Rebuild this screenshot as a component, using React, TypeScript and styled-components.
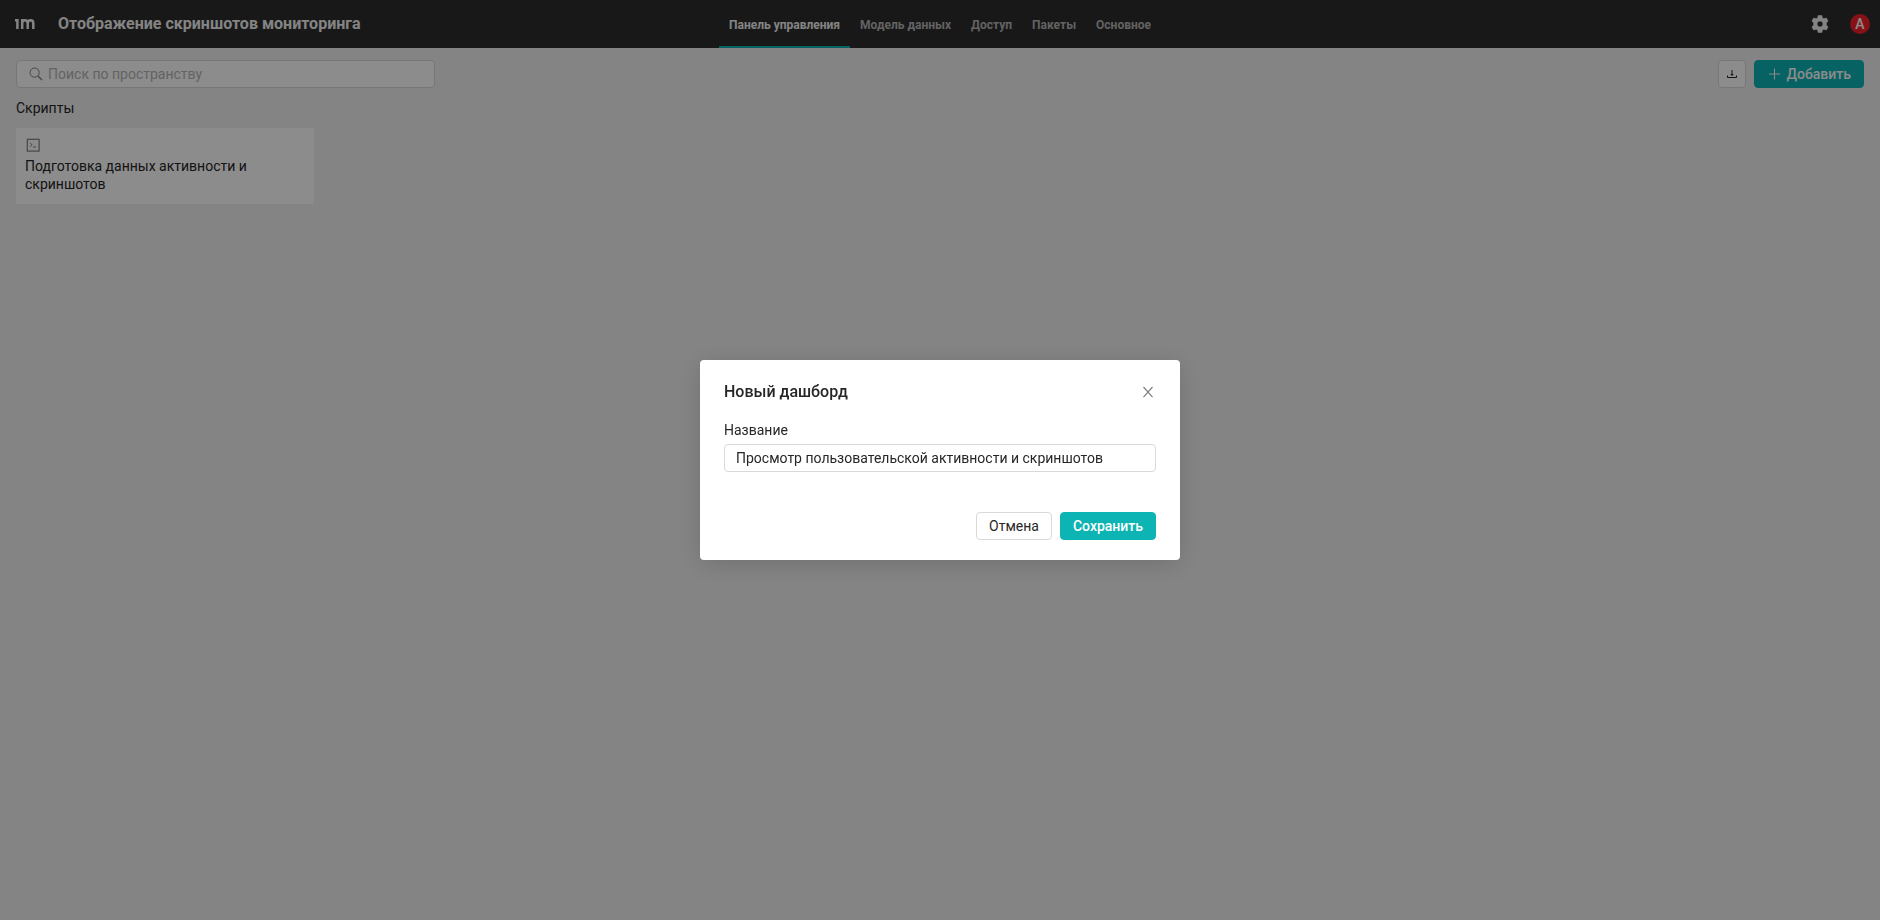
import React from "react";
import styled, { createGlobalStyle } from "styled-components";

const color = {
  header: "#2d2d2d",
  page: "#f0f0f0",
  surface: "#ffffff",
  border: "#d9d9d9",
  text: "#262626",
  muted: "#808080",
  teal: "#0db4b4",
  red: "#f5222d",
};

const GlobalStyle = createGlobalStyle`
  *, *::before, *::after { box-sizing: border-box; }
  body {
    margin: 0;
    background: ${color.page};
    color: ${color.text};
    font: 400 14px/20px Roboto, "Noto Sans", sans-serif;
  }
  button, input { font: inherit; color: inherit; }
  h1, h2, p { margin: 0; }
  svg { display: block; flex: none; }
`;

const Page = styled.div`
  min-height: 100vh;
`;

const Header = styled.header`
  display: grid;
  grid-template-columns: 1fr auto 1fr;
  height: 48px;
  background: ${color.header};
  color: #f0f0f0;
`;

const Brand = styled.div`
  display: flex;
  align-items: center;
  gap: 23px;
  padding-left: 15px;
`;

const Title = styled.h1`
  font-size: 16px;
  line-height: 24px;
  font-weight: 700;
  white-space: nowrap;
`;

const Nav = styled.nav`
  display: flex;
`;

const NavLink = styled.a<{ $active?: boolean }>`
  display: flex;
  align-items: center;
  padding: 4px 10px 0;
  border-bottom: 2px solid ${(p) => (p.$active ? color.teal : "transparent")};
  color: ${(p) => (p.$active ? "#f0f0f0" : "#b4b4b4")};
  font-size: 12px;
  font-weight: 700;
  text-decoration: none;
`;

const Account = styled.div`
  display: flex;
  align-items: center;
  justify-content: flex-end;
  gap: 21px;
  padding-right: 10px;
`;

const IconButton = styled.button`
  display: grid;
  place-items: center;
  padding: 0;
  border: 0;
  background: none;
  color: inherit;
`;

const Avatar = styled(IconButton)`
  width: 20px;
  height: 20px;
  border-radius: 50%;
  background: ${color.red};
  color: #fff;
  font-weight: 500;
`;

const Main = styled.main`
  display: flex;
  flex-direction: column;
  gap: 10px;
  padding: 12px 16px;
`;

const Toolbar = styled.div`
  display: flex;
  align-items: center;
  gap: 8px;
`;

const Search = styled.label`
  display: flex;
  align-items: center;
  gap: 5px;
  width: 419px;
  height: 28px;
  margin-right: auto;
  padding: 0 12px;
  border: 1px solid ${color.border};
  border-radius: 4px;
  background: ${color.surface};
  color: ${color.muted};
`;

const SearchInput = styled.input`
  flex: 1;
  min-width: 0;
  padding: 0;
  border: 0;
  outline: 0;
  background: none;
  &::placeholder { color: #b4b4b4; opacity: 1; }
`;

const Button = styled.button<{ $primary?: boolean }>`
  display: flex;
  align-items: center;
  justify-content: center;
  gap: 6px;
  height: 28px;
  padding: 0 12px;
  border: 1px solid ${(p) => (p.$primary ? color.teal : color.border)};
  border-radius: 4px;
  background: ${(p) => (p.$primary ? color.teal : color.surface)};
  color: ${(p) => (p.$primary ? "#fff" : color.text)};
  font-weight: ${(p) => (p.$primary ? 500 : 400)};
`;

const SquareButton = styled(Button)`
  width: 28px;
  padding: 0;
`;

const SectionTitle = styled.h2`
  font-size: 14px;
  line-height: 20px;
  font-weight: 400;
`;

const Cards = styled.div`
  display: grid;
  grid-template-columns: repeat(6, 1fr);
  gap: 12px;
`;

const Card = styled.article`
  display: flex;
  flex-direction: column;
  gap: 5px;
  padding: 10px 9px 11px;
  border-radius: 2px;
  background: ${color.surface};
`;

const CardName = styled.p`
  line-height: 18px;
`;

const Overlay = styled.div`
  position: fixed;
  inset: 0;
  display: grid;
  place-items: center;
  background: rgba(0, 0, 0, 0.45);
`;

const Dialog = styled.form`
  display: flex;
  flex-direction: column;
  width: 480px;
  padding: 20px 24px;
  border-radius: 4px;
  background: ${color.surface};
  box-shadow: 0 4px 24px rgba(0, 0, 0, 0.15);
`;

const DialogHead = styled.div`
  display: flex;
  align-items: center;
  justify-content: space-between;
  margin-bottom: 16px;
`;

const DialogTitle = styled.h2`
  font-size: 16px;
  line-height: 24px;
  font-weight: 500;
`;

const Label = styled.label`
  margin-bottom: 4px;
`;

const TextInput = styled.input`
  height: 28px;
  padding: 0 11px;
  border: 1px solid ${color.border};
  border-radius: 4px;
  outline: 0;
  background: ${color.surface};
`;

const DialogActions = styled.div`
  display: flex;
  justify-content: flex-end;
  gap: 8px;
  margin-top: 40px;
`;

const Logo = () => (
  <svg width="20" height="12" viewBox="0 0 20 12" fill="none" stroke="#f0f0f0" strokeWidth="2.5" role="img" aria-label="im">
    <path d="M0 2.3H2.4V11" />
    <path d="M7.2 11V1.1M7.2 11V5.8C7.2 3.4 8.2 2.3 9.9 2.3S12.7 3.4 12.7 5.4V11M12.7 5.8C12.7 3.4 13.8 2.3 15.5 2.3S18.3 3.4 18.3 5.4V11" />
  </svg>
);

const GearIcon = () => (
  <svg width="18" height="18" viewBox="0 0 18 18" fill="currentColor" aria-hidden="true">
    <path
      fillRule="evenodd"
      d="M7.2 .4H10.8L11.4 2.9L12.8 3.7L15.3 3L17.1 6.1L15.3 7.9V10.1L17.1 11.9L15.3 15L12.8 14.3L11.4 15.1L10.8 17.6H7.2L6.6 15.1L5.2 14.3L2.7 15L.9 11.9L2.7 10.1V7.9L.9 6.1L2.7 3L5.2 3.7L6.6 2.9ZM9 6A3 3 0 1 0 9 12A3 3 0 1 0 9 6Z"
      stroke="currentColor"
      strokeWidth=".6"
      strokeLinejoin="round"
    />
  </svg>
);

const SearchIcon = () => (
  <svg width="14" height="14" viewBox="0 0 14 14" fill="none" stroke="currentColor" aria-hidden="true">
    <circle cx="5.6" cy="5.6" r="4.6" />
    <path d="M9 9L13 13" strokeWidth="1.2" />
  </svg>
);

const DownloadIcon = () => (
  <svg width="10" height="10" viewBox="0 0 10 10" fill="none" stroke="currentColor" aria-hidden="true">
    <path d="M.5 6.5V8.5H9.5V6.5M5 1V6" />
    <path d="M3.2 5H6.8L5 7Z" fill="currentColor" stroke="none" />
  </svg>
);

const PlusIcon = () => (
  <svg width="14" height="14" viewBox="0 0 14 14" fill="none" stroke="currentColor" aria-hidden="true">
    <path d="M7.5 1.5V12.5M2 7H13" />
  </svg>
);

const ScriptIcon = () => (
  <svg width="16" height="14" viewBox="0 0 16 14" fill="none" stroke={color.muted} aria-hidden="true">
    <rect x="2.3" y="1.3" width="11.8" height="11.8" strokeWidth="1.2" />
    <path d="M5 4.8L7 6.8L5 8.8M8 9H11" />
  </svg>
);

const CloseIcon = () => (
  <svg width="16" height="16" viewBox="0 0 16 16" fill="none" stroke={color.muted} strokeWidth="1.2" aria-hidden="true">
    <path d="M3.5 3L12.5 13.2M12.5 3L3.5 13.2" />
  </svg>
);

const sections = ["Панель управления", "Модель данных", "Доступ", "Пакеты", "Основное"];

export default function App() {
  return (
    <Page>
      <GlobalStyle />
      <Header>
        <Brand>
          <Logo />
          <Title>Отображение скриншотов мониторинга</Title>
        </Brand>
        <Nav>
          {sections.map((name, i) => (
            <NavLink key={name} href="#" $active={i === 0}>
              {name}
            </NavLink>
          ))}
        </Nav>
        <Account>
          <IconButton type="button" aria-label="Настройки">
            <GearIcon />
          </IconButton>
          <Avatar type="button">A</Avatar>
        </Account>
      </Header>
      <Main>
        <Toolbar>
          <Search>
            <SearchIcon />
            <SearchInput type="text" placeholder="Поиск по пространству" aria-label="Поиск по пространству" />
          </Search>
          <SquareButton type="button" aria-label="Загрузить">
            <DownloadIcon />
          </SquareButton>
          <Button type="button" $primary>
            <PlusIcon />
            Добавить
          </Button>
        </Toolbar>
        <SectionTitle>Скрипты</SectionTitle>
        <Cards>
          <Card>
            <ScriptIcon />
            <CardName>Подготовка данных активности и скриншотов</CardName>
          </Card>
        </Cards>
      </Main>
      <Overlay>
        <Dialog role="dialog" aria-labelledby="dialog-title" onSubmit={(e) => e.preventDefault()}>
          <DialogHead>
            <DialogTitle id="dialog-title">Новый дашборд</DialogTitle>
            <IconButton type="button" aria-label="Закрыть">
              <CloseIcon />
            </IconButton>
          </DialogHead>
          <Label htmlFor="dashboard-name">Название</Label>
          <TextInput id="dashboard-name" type="text" defaultValue="Просмотр пользовательской активности и скриншотов" />
          <DialogActions>
            <Button type="button">Отмена</Button>
            <Button type="submit" $primary>
              Сохранить
            </Button>
          </DialogActions>
        </Dialog>
      </Overlay>
    </Page>
  );
}
